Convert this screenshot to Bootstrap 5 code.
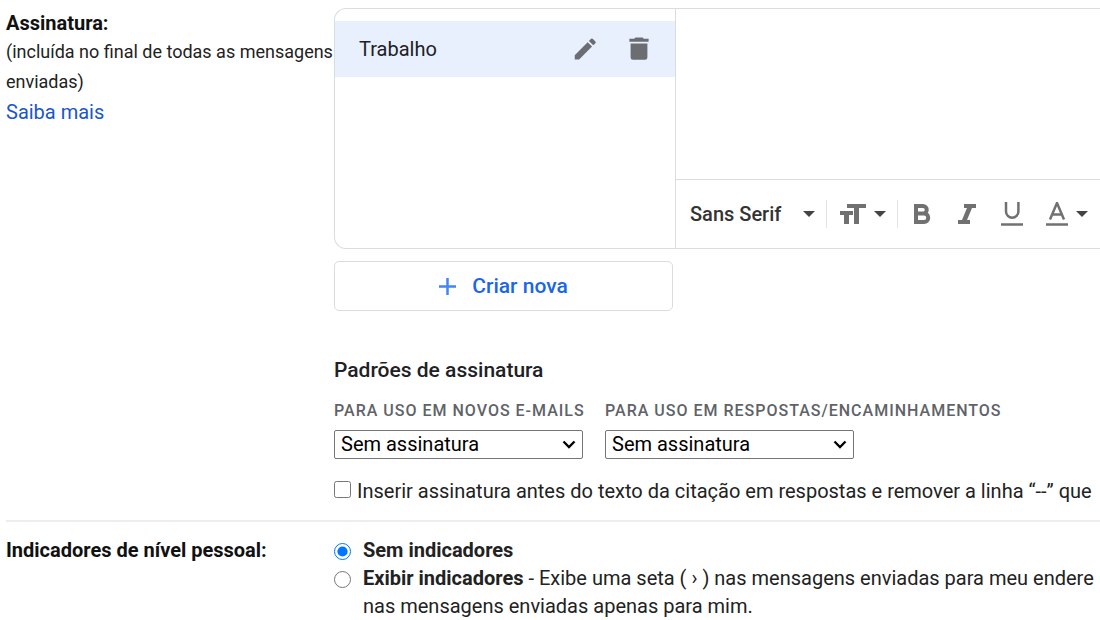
<!DOCTYPE html>
<html lang="pt-BR">
<head>
<meta charset="utf-8">
<meta name="viewport" content="width=device-width, initial-scale=1">
<title>Configurações de assinatura</title>
<link href="https://cdn.jsdelivr.net/npm/bootstrap@5.3.0/dist/css/bootstrap.min.css" rel="stylesheet">
<style>
  body { font: 400 20px/28px Roboto, "Liberation Sans", sans-serif; color: #222; background: #fff; overflow-x: hidden; }
  .setting { display: grid; grid-template-columns: 328px minmax(0, 1fr); padding-left: 6px; }
  .setting-head { padding-top: 9px; }
  .setting-title { font-size: 20px; line-height: 28px; font-weight: 700; color: #111; margin: 0; }
  .setting-note { font-size: 18px; line-height: 30px; }
  .more-link { color: #1a56cc; line-height: 30px; }
  .divider { height: 2px; background: #ededed; margin-left: 6px; }

  .sig-panel { border: 1px solid #dadce0; border-right: 0; border-radius: 12px 0 0 12px; min-height: 241px; }
  .sig-list { width: 341px; border-right: 1px solid #dadce0; }
  .sig-item { height: 56px; padding: 0 24px; background: #e8f0fe; color: #202124; }
  .icon-btn { border: 0; background: none; padding: 0; color: #6b6d72; line-height: 0; }
  .editor-text { min-height: 170px; }
  .toolbar-row { height: 69px; padding-left: 14px; border-top: 1px solid #dadce0; white-space: nowrap; overflow: hidden; }
  .tool { border: 0; background: none; padding: 0; color: #717171; display: flex; align-items: center; justify-content: center; flex: none; }
  .font-tool { color: #333; font-weight: 500; gap: 22px; }
  .tool-sep { width: 1px; height: 28px; background: #e3e3e3; flex: none; margin: 0 13px 0 11px; }
  .style-tools { gap: 23px; }
  .style-tools .tool { min-width: 22px; }

  .create-btn { width: 339px; height: 50px; margin-top: 12px; border: 1px solid #dadce0; border-radius: 5px; background: #fff; color: #1a66e8; font-size: 21px; font-weight: 500; }
  .subhead { font-size: 21px; line-height: 28px; font-weight: 500; color: #202124; margin: 45px 0 0; }
  .defaults { gap: 22px; margin-top: 15px; }
  .default-field { width: 249px; }
  .caps-label { display: block; font-size: 16px; line-height: 24px; font-weight: 500; color: #5f6368; letter-spacing: 1px; white-space: nowrap; }
  .sig-select { appearance: none; display: block; width: 249px; height: 29px; margin-top: 7px; padding: 0 6px; border: 1px solid #767676; border-radius: 2px; color: #000; line-height: 27px;
    background: #fff url("data:image/svg+xml,%3Csvg xmlns='http://www.w3.org/2000/svg' viewBox='0 0 14 9'%3E%3Cpath d='M1.5 1.5L7 7l5.500-5.500' fill='none' stroke='%23000' stroke-width='2.300'/%3E%3C/svg%3E") no-repeat right 6px center / 14px 9px; }
  .choice { width: 17px; height: 17px; margin: 0; flex: none; }
  .insert-row { gap: 6px; margin: 18px 0 15px; }
  .levels { padding-top: 14px; }
  .level { gap: 12px; }
  .level .choice { margin-top: 7px; }
</style>
</head>
<body>
<main class="overflow-hidden">
  <section class="setting">
    <div class="setting-head">
      <h2 class="setting-title">Assinatura:</h2>
      <div class="setting-note">(incluída no final de todas as mensagens enviadas)</div>
      <a class="more-link text-decoration-none d-block" href="#">Saiba mais</a>
    </div>
    <div class="d-flex flex-column pt-2">
      <div class="sig-panel d-flex">
        <div class="sig-list flex-shrink-0 pt-2">
          <div class="sig-item d-flex align-items-center mt-1">
            <span class="flex-grow-1">Trabalho</span>
            <button class="icon-btn me-4" type="button" aria-label="Editar">
              <svg width="32" height="28" viewBox="0 0 27 24" fill="currentColor"><path d="M3 17.250V21h3.750L17.810 9.940l-3.750-3.750L3 17.250zM20.710 7.040a1 1 0 0 0 0-1.410l-2.340-2.340a1 1 0 0 0-1.410 0l-1.830 1.830 3.750 3.750 1.830-1.830z"/></svg>
            </button>
            <button class="icon-btn" type="button" aria-label="Excluir">
              <svg width="24" height="30" viewBox="2 0 20 24" fill="currentColor"><path d="M5 7.500V19a2 2 0 0 0 2 2h10a2 2 0 0 0 2-2V7.500zM20 3.500h-4L15 2.500H9l-1 1H4v2.500h16z"/></svg>
            </button>
          </div>
        </div>
        <div class="flex-grow-1 overflow-hidden">
          <div class="editor-text" contenteditable="true" role="textbox" aria-label="Texto da assinatura"></div>
          <div class="toolbar-row d-flex align-items-center">
            <button class="tool font-tool" type="button">Sans Serif
              <svg width="12" height="6" viewBox="0 0 12 6" fill="#444"><path d="M0 0h12L6 6z"/></svg></button>
            <span class="tool-sep"></span>
            <button class="tool gap-2" type="button" aria-label="Tamanho">
              <svg width="26" height="20" viewBox="0 0 26 20" fill="currentColor"><path d="M7 0h19v4h-7v16h-5V4H7zM0 7h13v4H9v9H4v-9H0z"/></svg>
              <svg width="12" height="6" viewBox="0 0 12 6" fill="#444"><path d="M0 0h12L6 6z"/></svg></button>
            <span class="tool-sep"></span>
            <div class="style-tools d-flex align-items-center">
            <button class="tool" type="button" aria-label="Negrito">
              <svg width="17" height="20" viewBox="0 0 17 20" fill="none" stroke="currentColor" stroke-width="4"><path d="M2 2h7a3.700 3.700 0 0 1 0 7.500H2zM2 9.500h8a4.200 4.200 0 0 1 0 8.500H2z"/></svg></button>
            <button class="tool" type="button" aria-label="Itálico">
              <svg width="18" height="20" viewBox="0 0 18 20" fill="currentColor"><path d="M6 0h12v4h-4L9 16h3v4H0v-4h4L9 4H6z"/></svg></button>
            <button class="tool" type="button" aria-label="Sublinhado">
              <svg width="22" height="24" viewBox="0 0 22 24" fill="none" stroke="currentColor" stroke-width="2.500"><path d="M5 0v9.500a6.200 6.200 0 0 0 12.400 0V0M0 22.500h22"/></svg></button>
            <button class="tool gap-2" type="button" aria-label="Cor do texto">
              <svg width="22" height="24" viewBox="0 0 22 24" fill="none" stroke="currentColor" stroke-width="2.500"><path d="M4 17.500L11 1l7 16.500M6.500 12.500h9M0 22.500h22"/></svg>
              <svg width="12" height="6" viewBox="0 0 12 6" fill="#444"><path d="M0 0h12L6 6z"/></svg></button>
            </div>
          </div>
        </div>
      </div>
      <button class="create-btn d-flex align-items-center justify-content-center gap-3" type="button">
        <svg width="17" height="17" viewBox="0 0 17 17" stroke="#4285f4" stroke-width="2.500"><path d="M8.500 0v17M0 8.500h17"/></svg>Criar nova</button>

      <h3 class="subhead">Padrões de assinatura</h3>
      <div class="defaults d-flex">
        <div class="default-field">
          <label class="caps-label" for="novos">PARA USO EM NOVOS E-MAILS</label>
          <select class="sig-select" id="novos"><option>Sem assinatura</option></select>
        </div>
        <div class="default-field">
          <label class="caps-label" for="respostas">PARA USO EM RESPOSTAS/ENCAMINHAMENTOS</label>
          <select class="sig-select" id="respostas"><option>Sem assinatura</option></select>
        </div>
      </div>
      <div class="insert-row d-flex align-items-start text-nowrap">
        <input class="choice mt-1" type="checkbox" id="inserir">
        <label for="inserir">Inserir assinatura antes do texto da citação em respostas e remover a linha “--” que</label>
      </div>
    </div>
  </section>
  <div class="divider"></div>
  <section class="setting levels">
    <h2 class="setting-title">Indicadores de nível pessoal:</h2>
    <div class="text-nowrap">
      <div class="level d-flex">
        <input class="choice" type="radio" name="ind" id="sem" checked>
        <label class="fw-bold" for="sem">Sem indicadores</label>
      </div>
      <div class="level d-flex">
        <input class="choice" type="radio" name="ind" id="exibir">
        <label for="exibir"><b>Exibir indicadores</b> - Exibe uma seta ( › ) nas mensagens enviadas para meu endere<br>nas mensagens enviadas apenas para mim.</label>
      </div>
    </div>
  </section>
</main>
<script src="https://cdn.jsdelivr.net/npm/bootstrap@5.3.0/dist/js/bootstrap.bundle.min.js"></script>
</body>
</html>
